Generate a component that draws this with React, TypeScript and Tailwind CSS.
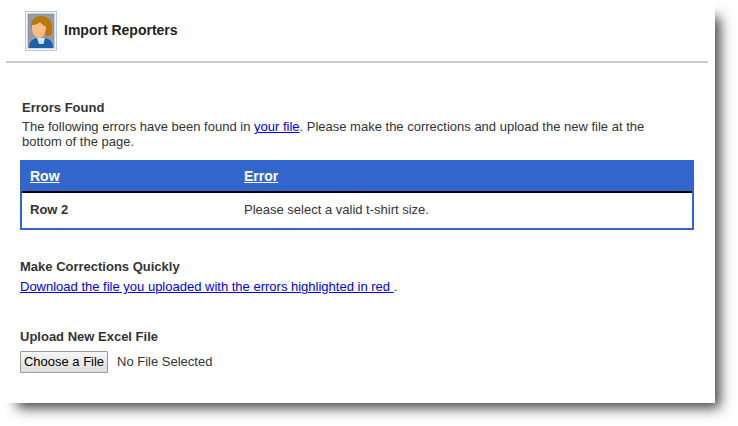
import React from 'react';

function ReporterIcon() {
  return (
    <svg width="32" height="40" viewBox="0 0 32 40" className="block">
      <rect x="0.5" y="0.5" width="31" height="39" fill="#eef2fb" stroke="#b9c7e6" />
      <rect x="3" y="3" width="26" height="34" fill="#9a9aa6" stroke="#7f7f8c" strokeWidth="0.5" />
      <path d="M4 37 C4 30 8 28 12 27 L20 27 C25 28 28 31 28 37 Z" fill="#1d5fa8" />
      <path d="M12 27 L20 27 L18.5 33 L14 33 Z" fill="#cfe6f2" />
      <path d="M6 17 C5 8 11 5 16 5 C24 5 27 11 27 16 C27 20 28 23 24 25 C21 26 20 24 20 22 L11 20 Z" fill="#b8790f" />
      <path d="M7 14 C11 14 14 12 15 11 C17 14 20 15 21 16 C21 22 18 27 14 27 C10 27 6 21 7 14 Z" fill="#fbbd82" />
    </svg>
  );
}

export default function App() {
  return (
    <div className="h-[426px] w-[738px] overflow-hidden bg-white font-['Liberation_Sans',Arial,sans-serif] text-[#333]">
      <div className="h-[403px] w-[715px] bg-white shadow-[11px_11px_12px_-6px_#444]">
        <header className="flex h-[61px] items-start pl-[25px] pt-[11px]">
          <ReporterIcon />
          <h1 className="ml-[7px] mt-[10px] text-[14px] font-bold leading-[18px] text-[#222]">Import Reporters</h1>
        </header>
        <div className="ml-[6px] h-[2px] w-[702px] bg-[#cccccc]" />

        <section className="ml-[22px] mr-[60px] mt-[37px] text-[13px] leading-[15px]">
          <h2 className="font-bold leading-[16px]">Errors Found</h2>
          <p className="mt-[3px]">
            The following errors have been found in{' '}
            <a href="#" className="text-[#0000ee] underline">your file</a>
            . Please make the corrections and upload the new file at the bottom of the page.
          </p>
        </section>

        <table className="ml-[20px] mt-[11px] w-[674px] border-collapse text-left text-[13px]">
          <thead>
            <tr className="h-[32px] border-x-2 border-x-[#3366cc] bg-[#3366cc] text-[14px] font-bold text-white">
              <th className="w-[223px] pl-[8px] pt-[2px]"><a href="#" className="underline">Row</a></th>
              <th className="pt-[2px]"><a href="#" className="underline">Error</a></th>
            </tr>
          </thead>
          <tbody>
            <tr className="h-[37px] border-x-2 border-b-2 border-x-[#3366cc] border-b-[#3366cc] border-t-2 border-t-black">
              <td className="pb-[1px] pl-[8px] font-bold">Row 2</td>
              <td className="pb-[1px]">Please select a valid t-shirt size.</td>
            </tr>
          </tbody>
        </table>

        <section className="ml-[20px] mt-[29px] text-[13px]">
          <h2 className="font-bold leading-[16px]">Make Corrections Quickly</h2>
          <p className="mt-[4px] leading-[15px]">
            <a href="#" className="text-[#0000ee] underline">Download the file you uploaded with the errors highlighted in red </a>.
          </p>
        </section>

        <section className="ml-[20px] mt-[35px]">
          <h2 className="text-[13px] font-bold leading-[16px]">Upload New Excel File</h2>
          <div className="mt-[6px] flex items-center text-[13px]">
            <button className="h-[22px] w-[88px] rounded-[1px] border border-[#999] bg-gradient-to-b from-[#f6f6f6] to-[#dedede] text-[13px] text-black">
              Choose a File
            </button>
            <span className="ml-[9px]">No File Selected</span>
          </div>
        </section>
      </div>
    </div>
  );
}
